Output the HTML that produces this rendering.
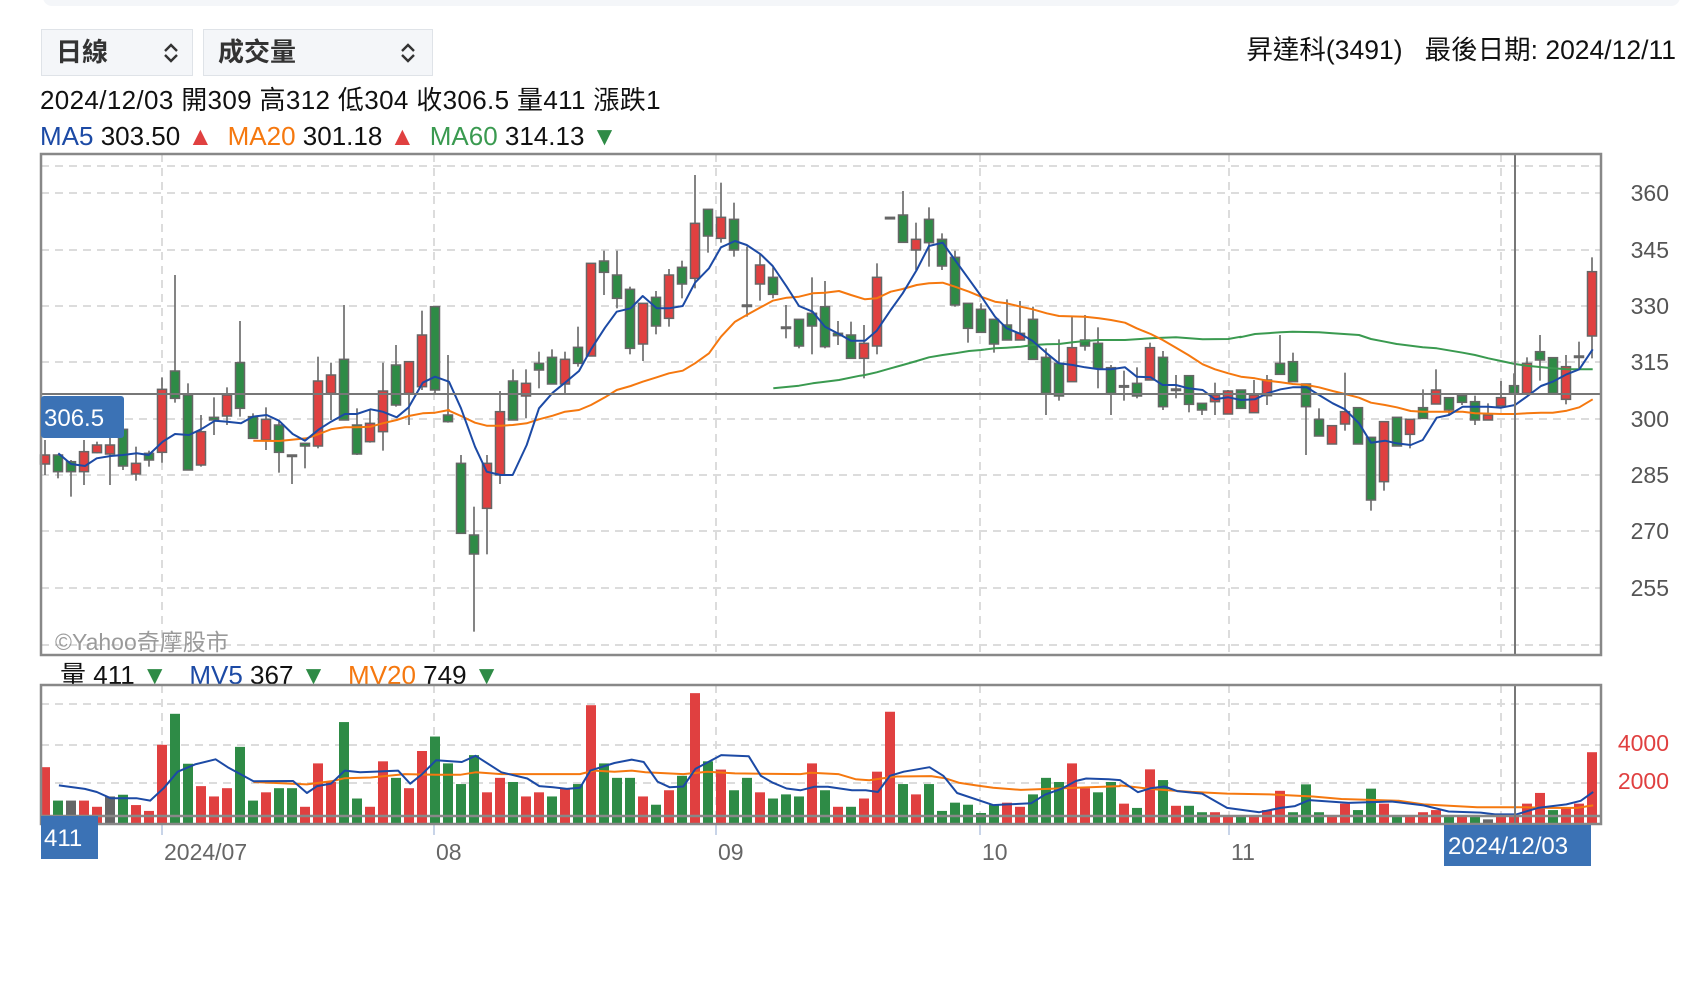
<!DOCTYPE html>
<html><head><meta charset="utf-8">
<style>
html,body{margin:0;padding:0;background:#fff;width:1694px;height:984px;overflow:hidden}
body{font-family:"Liberation Sans","Noto Sans CJK TC",sans-serif;position:relative}
.topbar{position:absolute;left:43px;top:-12px;width:1637px;height:18px;background:#f4f6f9;border-radius:10px}
.sel{position:absolute;top:29px;height:47px;background:#f4f6f9;border:1.5px solid #dfe3e8;box-sizing:border-box;font-weight:bold;font-size:26px;color:#333;line-height:44px;padding-left:14px}
.sel svg{position:absolute;top:12px}
.t{position:absolute;white-space:nowrap;font-size:26px;color:#111;line-height:30px}
</style></head><body>
<div class="topbar"></div>
<div class="sel" style="left:41px;width:152px">日線<svg style="left:118px" width="22" height="22" viewBox="0 0 22 22"><path d="M5 9 L11 3 L17 9 M5 13 L11 19 L17 13" fill="none" stroke="#333" stroke-width="2.4"/></svg></div>
<div class="sel" style="left:203px;width:230px">成交量<svg style="left:193px" width="22" height="22" viewBox="0 0 22 22"><path d="M5 9 L11 3 L17 9 M5 13 L11 19 L17 13" fill="none" stroke="#333" stroke-width="2.4"/></svg></div>
<div class="t" style="right:18px;top:35px;font-size:26.5px">昇達科(3491)&nbsp;&nbsp;&nbsp;最後日期: 2024/12/11</div>
<div class="t" style="left:40px;top:85px;letter-spacing:0.35px">2024/12/03 開309 高312 低304 收306.5 量411 漲跌1</div>
<div class="t" style="left:40px;top:121px"><span style="color:#1c4aa5">MA5</span> 303.50 <span style="color:#e04040">▲</span>&nbsp; <span style="color:#f5780f">MA20</span> 301.18 <span style="color:#e04040">▲</span>&nbsp; <span style="color:#3a9a50">MA60</span> 314.13 <span style="color:#2e8b46">▼</span></div>
<div class="t" style="left:60px;top:660px"><span>量</span> 411 <span style="color:#2e8b46">▼</span>&nbsp;&nbsp; <span style="color:#1c4aa5">MV5</span> 367 <span style="color:#2e8b46">▼</span>&nbsp;&nbsp; <span style="color:#f5780f">MV20</span> 749 <span style="color:#2e8b46">▼</span></div>
<svg id="c" width="1694" height="984" style="position:absolute;left:0;top:0"></svg>
<script>
var S=document.getElementById('c'),h='';
function L(x1,y1,x2,y2,c,w,d){h+='<line x1="'+x1+'" y1="'+y1+'" x2="'+x2+'" y2="'+y2+'" stroke="'+c+'" stroke-width="'+w+'"'+(d?' stroke-dasharray="'+d+'"':'')+'/>';}
var RED='#e04040',GRN='#2e8b46',GRY='#666';
[166,193,250,306,362,419,475,531,588,645].forEach(function(y){L(41,y,1601,y,'#dcdcdc',2,'8,6');});
[162,434,716,980,1229,1501].forEach(function(x){L(x,154,x,655,'#dcdcdc',2,'8,6');});
[704,745,783].forEach(function(y){L(41,y,1601,y,'#dcdcdc',2,'8,6');});
[162,434,716,980,1229,1501].forEach(function(x){L(x,685,x,824,'#dcdcdc',2,'8,6');L(x,824,x,835,'#c8d4e8',2);});
var C=[
['R',885,912,840,945],['G',885,935,885,955],['G',905,935,900,1010],['R',875,935,840,975],['R',855,878,845,880],['R',855,882,830,975],['G',808,918,800,930],['R',910,942,860,962],['G',880,900,872,920],['R',688,877,652,908],
['G',633,715,345,728],['G',705,930,670,930],['R',815,915,765,920],['G',772,780,712,825],['R',705,768,682,795],['G',608,745,483,770],['G',770,835,760,835],['R',778,840,742,870],['G',795,877,780,938],['G',885,889,885,972],
['G',850,858,850,925],['R',663,858,590,865],['R',645,700,608,780],['G',598,780,435,780],['G',795,882,745,885],['R',790,845,750,848],['R',693,815,608,872],['G',615,735,555,740],['R',605,700,605,795],['R',525,680,452,690],
['G',440,690,440,700],['G',765,785,585,788],
['G',910,1120,885,1120],['G',1125,1182,1040,1415],['R',910,1045,885,1183],['R',755,945,693,972],['G',663,780,628,780],['R',670,708,628,775],['G',610,630,575,685],['G',592,672,568,672],['R',598,672,575,700],['G',562,610,500,620],
['R',310,588,310,588],['G',303,337,272,405],['G',345,415,272,445],['G',388,565,380,583],['R',430,552,430,603],['G',412,498,393,523],['R',345,475,327,500],['G',322,372,302,415],['R',190,355,45,385],['G',148,228,148,278],
['R',172,235,68,248],['G',178,270,128,290],['G',435,439,260,470],['R',315,372,282,422],['G',352,403,322,415],['G',501,505,435,535],['G',478,558,478,565],['G',460,498,352,583],['G',440,560,363,565],['G',520,527,483,555],
['G',525,595,485,595],
['R',550,595,495,655],['R',352,558,310,583],['G',172,176,172,176],['G',165,247,93,247],['R',238,270,188,330],['G',178,248,142,320],['G',238,318,220,330],['G',292,435,272,440],['G',430,505,430,548],['G',448,517,430,517],
['G',478,552,478,578],['G',495,540,418,540],['R',520,540,423,540],['G',478,598,440,600],['G',592,700,565,765],['G',610,708,538,722],['R',563,665,470,665],['G',540,558,465,572],['G',550,625,502,685],['G',623,700,615,765],
['G',677,681,632,722],['G',670,708,622,715],['R',563,660,548,660],['G',592,740,573,750],['G',687,691,645,715],['G',647,733,647,757],['G',730,750,730,765],['R',705,725,668,765],['R',693,762,690,762],['G',690,745,690,745],
['R',705,758,660,758],['R',660,707,645,735],['G',610,643,525,643],['G',605,665,578,665],['G',672,740,672,885],['G',778,828,745,828],['R',797,852,797,852],['R',755,792,638,812],['G',743,852,743,852],['G',832,1020,832,1052],
['R',785,965,785,992],['G',772,858,772,858],['R',778,823,778,865],['G',743,775,688,775],['R',690,732,628,732],['G',713,750,713,765],['G',707,727,707,735],['G',725,780,707,795],['R',765,780,730,780],['R',713,738,663,738],
['G',677,700,640,700],['R',610,700,592,700],['G',575,600,525,662],['G',593,700,593,700],['R',620,718,585,733],['G',588,592,545,625],['R',335,528,292,595]];
function cx(i){return 45+i*13.0;}
function py(z){return 160+z/3;}
function poly(pts,off){return pts.map(function(p){return (off+p[0]/3).toFixed(1)+','+py(p[1]).toFixed(1);}).join(' ');}
function P(segs,c,w){var s='';segs.forEach(function(g){s+=poly(g[1],g[0])+' ';});h+='<polyline points="'+s+'" fill="none" stroke="'+c+'" stroke-width="'+w+'" stroke-linejoin="round"/>';}
var ma60=[[440,[[1000,685],[1077,677],[1118,670],[1155,665],[1197,660],[1260,647]]],[840,[[75,645],[110,637],[152,625],[188,615],[230,603],[267,592],[308,585],[345,580],[387,573],[423,570],[465,565],[500,563],[542,560],[578,555],[620,553],[657,552],[698,547],[735,543],[777,540],[855,540],[932,535],[968,533],[1008,532],[1088,538],[1165,537],[1203,530]]],[1240,[[0,532],[45,522],[122,517],[158,515],[237,517],[278,520],[357,525],[393,537],[435,545],[470,552],[548,562],[590,565],[668,578],[705,585],[745,595],[783,603],[825,612],[860,617],[938,625],[980,628],[1018,628],[1058,628]]]];
var ma20=[[40,[[640,842],[717,843],[800,835],[837,822],[873,808],[915,802],[950,802],[992,800],[1028,790],[1070,780],[1106,768],[1148,760],[1185,758],[1227,750]]],[440,[[27,752],[63,768],[105,788],[140,797],[182,797],[218,795],[260,790],[297,778],[338,767],[375,755],[417,750],[453,735],[495,712],[530,690],[572,678],[608,665],[650,652],[687,640],[728,632],[765,610],[807,580],[843,530],[885,485],[920,465],[962,442],[998,422],[1040,413],[1077,410],[1118,400],[1155,398],[1197,393],[1233,405]]],[840,[[75,418],[110,415],[152,395],[188,387],[230,375],[267,370],[308,368],[345,380],[387,395],[423,410],[465,425],[500,430],[542,440],[578,448],[620,460],[657,468],[735,470],[777,475],[813,480],[855,488],[890,505],[932,522],[968,540],[1008,563],[1045,585],[1088,613],[1125,628],[1165,640],[1203,650]]],[1240,[[45,655],[82,662],[122,667],[158,672],[200,675],[237,682],[278,693],[315,702],[357,713],[393,728],[435,735],[470,742],[512,753],[548,755],[590,755],[668,755],[705,760],[783,762],[825,762],[860,760],[903,758],[938,758],[980,752],[1018,742],[1058,718]]]];
var ma5=[[40,[[55,880],[93,912],[135,918],[170,895],[212,888],[248,885],[290,880],[326,885],[368,845],[405,822],[447,825],[483,808],[525,782],[562,785],[603,790],[638,770],[680,765],[717,782],[758,822],[795,842],[837,808],[873,785],[915,762],[950,762],[992,748],[1028,755],[1070,772],[1106,742],[1148,668],[1185,650],[1227,665]]],[440,[[63,745],[105,860],[140,935],[182,945],[218,945],[260,855],[297,745],[338,698],[375,668],[417,633],[453,568],[495,503],[530,455],[572,445],[608,408],[650,445],[687,445],[728,438],[765,368],[807,325],[843,262],[885,243],[920,255],[962,283],[998,318],[1040,380],[1077,438],[1118,455],[1155,500],[1197,522],[1233,542]]],[840,[[75,542],[110,512],[152,450],[188,400],[230,330],[267,258],[308,248],[345,300],[387,358],[423,408],[465,470],[500,505],[542,522],[578,543],[620,580],[657,610],[698,615],[735,622],[777,628],[813,628],[855,622],[890,650],[932,652],[968,675],[1008,675],[1045,685],[1088,690],[1125,718],[1165,712],[1203,720]]],[1240,[[45,718],[82,700],[122,688],[158,682],[200,682],[237,705],[278,730],[315,748],[357,790],[393,848],[435,842],[470,850],[512,855],[548,840],[590,773],[627,765],[668,740],[705,740],[745,740],[783,743],[825,735],[860,710],[903,678],[938,665],[980,643],[1018,628],[1058,568]]]];
C.forEach(function(c,i){var x=cx(i),col=c[0]=='R'?RED:GRN;var bt=py(c[1]),bb=py(c[2]);if(bb-bt<1.5)bb=bt+1.5;
L(x,py(c[3]),x,bt,GRY,1.6);L(x,bb,x,py(c[4]),GRY,1.6);
h+='<rect x="'+(x-4.5)+'" y="'+bt+'" width="9" height="'+(bb-bt)+'" fill="'+col+'" stroke="'+GRY+'" stroke-width="1.5"/>';});
P(ma60,'#3a9a50',2);P(ma20,'#f5780f',2);P(ma5,'#1c4aa5',2);
L(41,394,1601,394,'#777',2);L(1515,154,1515,655,'#777',2);
h+='<rect x="41" y="154" width="1560" height="501" fill="none" stroke="#888" stroke-width="2.5"/>';
h+='<rect x="41" y="396" width="83" height="42" rx="3" fill="#3b72b5"/><text x="44" y="426" font-size="24" fill="#fff">306.5</text>';
h+='<text x="55" y="650" font-size="23" fill="#9a9a9a" font-family="Liberation Sans,Noto Sans CJK TC,sans-serif">©Yahoo奇摩股市</text>';
[[360,193],[345,250],[330,306],[315,362],[300,419],[285,475],[270,531],[255,588]].forEach(function(a){h+='<text x="1669" y="'+(a[1]+8)+'" font-size="23" fill="#555" text-anchor="end">'+a[0]+'</text>';});
var V9=['R230','G327','K327','R327','R345','K315','G310','R340','R357','R165','G75','G220','R285','R315','R291','G171','G327','R303','G291','G291','R345','R219','R273','G99','G321','R345','R213','G261','R291','R183','G141','G219','G279','G195','R303','R261','G273','R315','R303','G315','R291','G279'];
var V10=['R50','G219','G261','G261','R315','G339','R297','G255','R15','G213','R237','G297','G261','R303','G321','G309','G315','R219','G297','R345','G345','R321','R243','R69','G279','R309','G279','G357','G333','G339','G363','G339','R333','R345','G309','G261','G273','R219','R291','G303','G273'];
var V11=['R338','G350','R242','G272','R344','G344','G362','R362','R375','G375','R375','R356','R302','G362','G284','G362','R375','R338','G356','G296','R338','G375','R375','R362','R356','G375','R375','G375','K382','R375','R375','R338','R308','G356','R350','R338','R194'];
var VB=824;
function vb(arr,start,sc){arr.forEach(function(s,k){var i=start+k,col=s[0]=='R'?RED:(s[0]=='G'?GRN:'#666');var hh=(395-(+s.slice(1)))/sc;h+='<rect x="'+(cx(i)-5)+'" y="'+(VB-hh)+'" width="10" height="'+hh+'" fill="'+col+'"/>';});}
vb(V9,0,2.904);vb(V10,42,2.904);vb(V11,83,2.8);
function VP(segs,c){var s='';segs.forEach(function(g){var sc=g[2];g[1].forEach(function(p){s+=(g[0]+p[0]/sc).toFixed(1)+','+(VB-(395-p[1])/sc).toFixed(1)+' ';});});h+='<polyline points="'+s+'" fill="none" stroke="'+c+'" stroke-width="2" stroke-linejoin="round"/>';}
VP([[40,[[620,273],[775,280],[850,270],[885,262],[960,260],[1060,250],[1150,252],[1220,252],[1265,245],[1340,250],[1568,250]],2.904],[580,[[40,240],[100,243],[150,240],[190,245],[300,250],[370,243],[450,248],[640,250],[670,246],[750,250],[800,265],[840,268],[880,262],[920,257],[1020,256],[1060,262],[1100,275],[1150,283],[1200,290],[1280,296],[1360,293],[1440,290],[1568,285]],2.904],[1120,[[0,287],[100,298],[200,305],[300,310],[420,312],[540,318],[620,325],[780,330],[850,340],[1000,348],[1120,348],[1200,350],[1280,350],[1325,343]],2.8]],'#f5780f');
VP([[40,[[55,283],[130,293],[165,302],[205,320],[280,320],[320,327],[360,290],[400,243],[450,222],[510,207],[545,230],[620,271],[735,270],[775,305],[805,285],[845,278],[885,240],[930,245],[1040,240],[1075,278],[1110,250],[1150,210],[1225,215],[1265,197],[1340,245],[1415,263],[1450,285],[1490,288],[1530,293]],2.904],[580,[[0,290],[30,240],[100,218],[150,208],[185,215],[225,272],[260,288],[300,286],[335,235],[410,195],[490,198],[525,255],[560,275],[600,292],[640,297],[680,287],[720,287],[790,297],[830,297],[865,302],[900,255],[940,243],[1015,230],[1055,255],[1095,305],[1200,340],[1240,338],[1310,335],[1350,310],[1400,292],[1440,270],[1470,263],[1535,265]],2.904],[1120,[[0,272],[50,306],[85,295],[125,290],[160,303],[230,310],[300,350],[390,362],[450,350],[490,345],[530,328],[640,336],[760,332],[850,343],[920,360],[1010,363],[1050,368],[1110,368],[1170,350],[1250,340],[1290,330],[1325,305]],2.8]],'#1c4aa5');
L(41,816,1601,816,'#888',2.5);L(1515,685,1515,824,'#777',2);
h+='<rect x="41" y="685" width="1560" height="139" fill="none" stroke="#888" stroke-width="2.5"/>';
h+='<text x="1669" y="751" font-size="23" fill="#e04040" text-anchor="end">4000</text><text x="1669" y="789" font-size="23" fill="#e04040" text-anchor="end">2000</text>';
h+='<rect x="41" y="816" width="57" height="43" fill="#3b72b5"/><text x="44" y="846" font-size="24" fill="#fff">411</text>';
[['2024/07',164],['08',436],['09',718],['10',982],['11',1231]].forEach(function(a){h+='<text x="'+a[1]+'" y="860" font-size="23" fill="#666">'+a[0]+'</text>';});
h+='<rect x="1444" y="825" width="147" height="41" fill="#3b72b5"/><text x="1448" y="854" font-size="24" fill="#fff">2024/12/03</text>';
S.innerHTML=h;
</script>
</body></html>
